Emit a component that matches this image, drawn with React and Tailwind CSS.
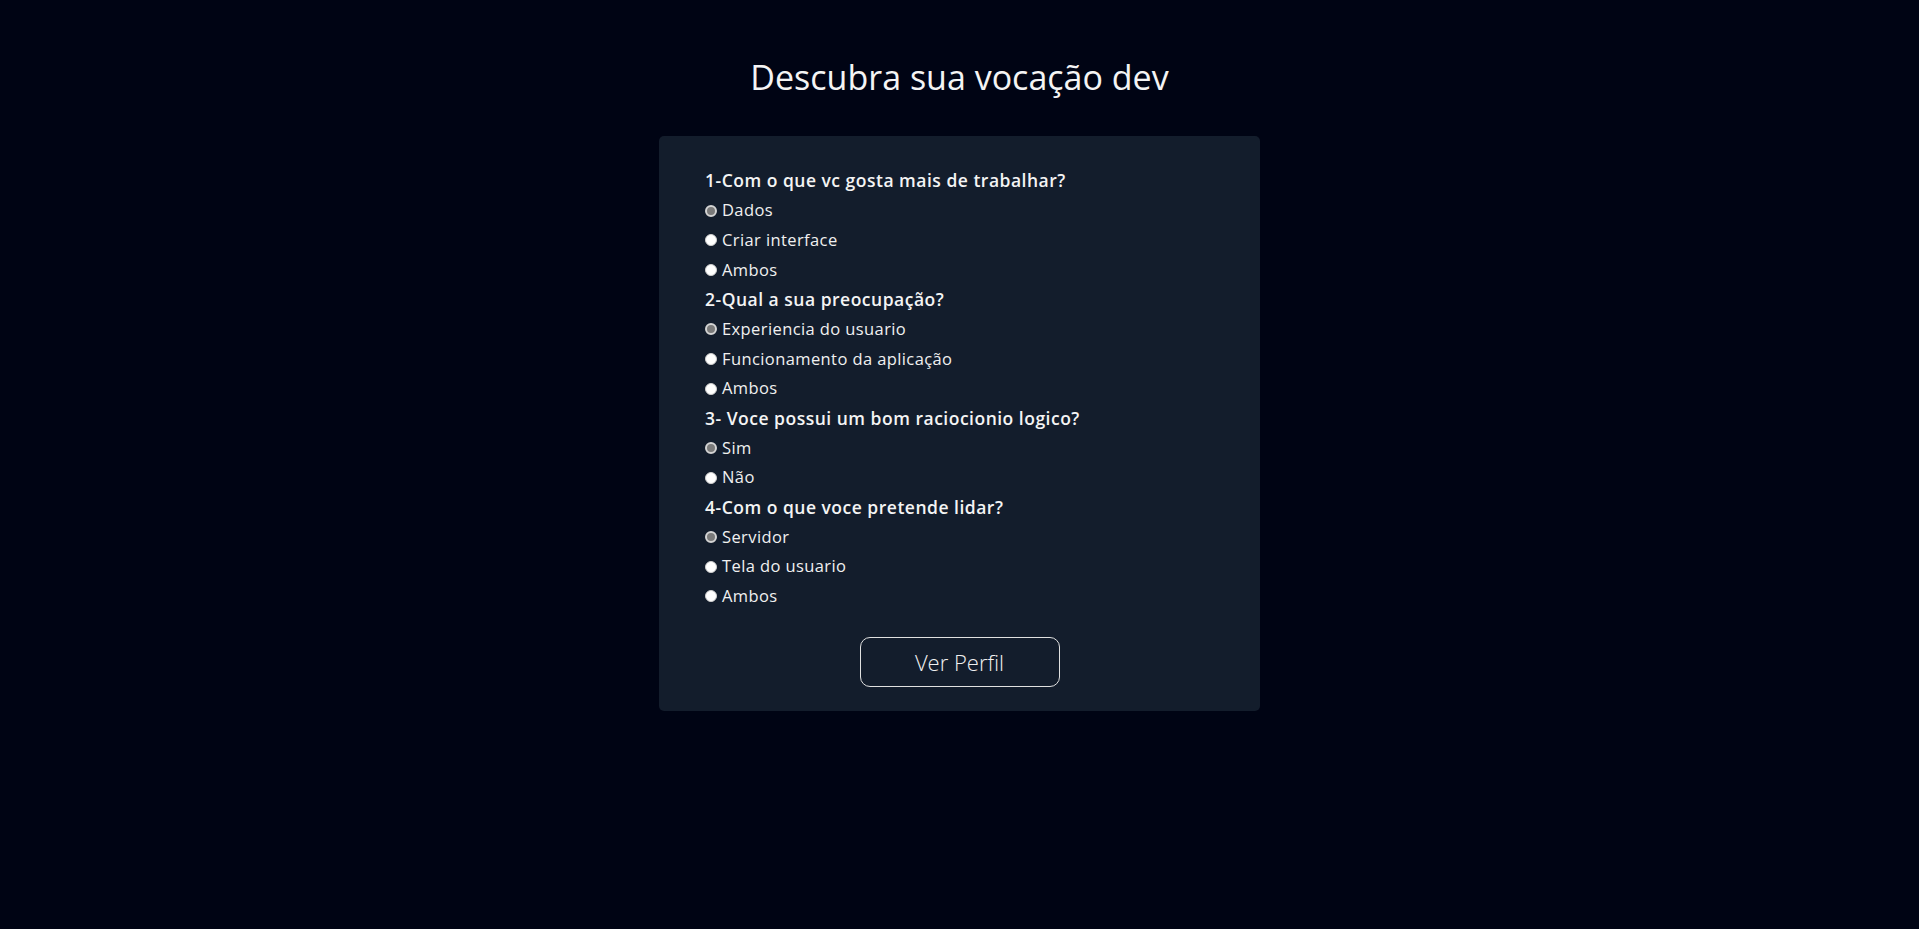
import React from "react";

const questions = [
  { q: "1-Com o que vc gosta mais de trabalhar?", opts: ["Dados", "Criar interface", "Ambos"] },
  { q: "2-Qual a sua preocupação?", opts: ["Experiencia do usuario", "Funcionamento da aplicação", "Ambos"] },
  { q: "3- Voce possui um bom raciocionio logico?", opts: ["Sim", "Não"] },
  { q: "4-Com o que voce pretende lidar?", opts: ["Servidor", "Tela do usuario", "Ambos"] },
];

function Radio({ checked }) {
  return checked ? (
    <span className="inline-block w-[12px] h-[12px] rounded-full border-2 border-[#d4d4d4] bg-[#7a7a7a] shrink-0" />
  ) : (
    <span className="inline-block w-[12px] h-[12px] rounded-full border border-[#cfcfcf] bg-white shrink-0" />
  );
}

export default function App() {
  return (
    <div
      className="min-h-[929px] w-full bg-[#000414] text-[#f0f0f0] flex flex-col items-center"
      style={{ fontFamily: '"Open Sans", "Liberation Sans", sans-serif' }}
    >
      <h1 className="mt-[53px] text-[34px] leading-[48px] font-normal text-[#f4f4f4]">
        Descubra sua vocação dev
      </h1>
      <div className="mt-[35px] w-[601px] rounded-[5px] bg-[#131d2c] pl-[46px] pr-[30px] pt-[30px] pb-[24px] flex flex-col">
        {questions.map((g, gi) => (
          <div key={gi} className="flex flex-col">
            <div className="h-[29.7px] leading-[29.7px] text-[17.5px] tracking-[0.5px] font-semibold text-[#f4f4f4] whitespace-nowrap">{g.q}</div>
            {g.opts.map((o, oi) => (
              <label key={oi} className="h-[29.7px] flex items-center gap-[5px] text-[16.5px] tracking-[0.4px] font-normal text-[#f0f0f0] whitespace-nowrap">
                <Radio checked={oi === 0} />
                <span>{o}</span>
              </label>
            ))}
          </div>
        ))}
        <div className="mt-[26px] flex justify-center pr-[16px]">
          <button className="w-[200px] h-[50px] rounded-[10px] border border-[#e0e0e0] text-[22px] font-light text-[#f0f0f0] bg-transparent">
            Ver Perfil
          </button>
        </div>
      </div>
    </div>
  );
}
